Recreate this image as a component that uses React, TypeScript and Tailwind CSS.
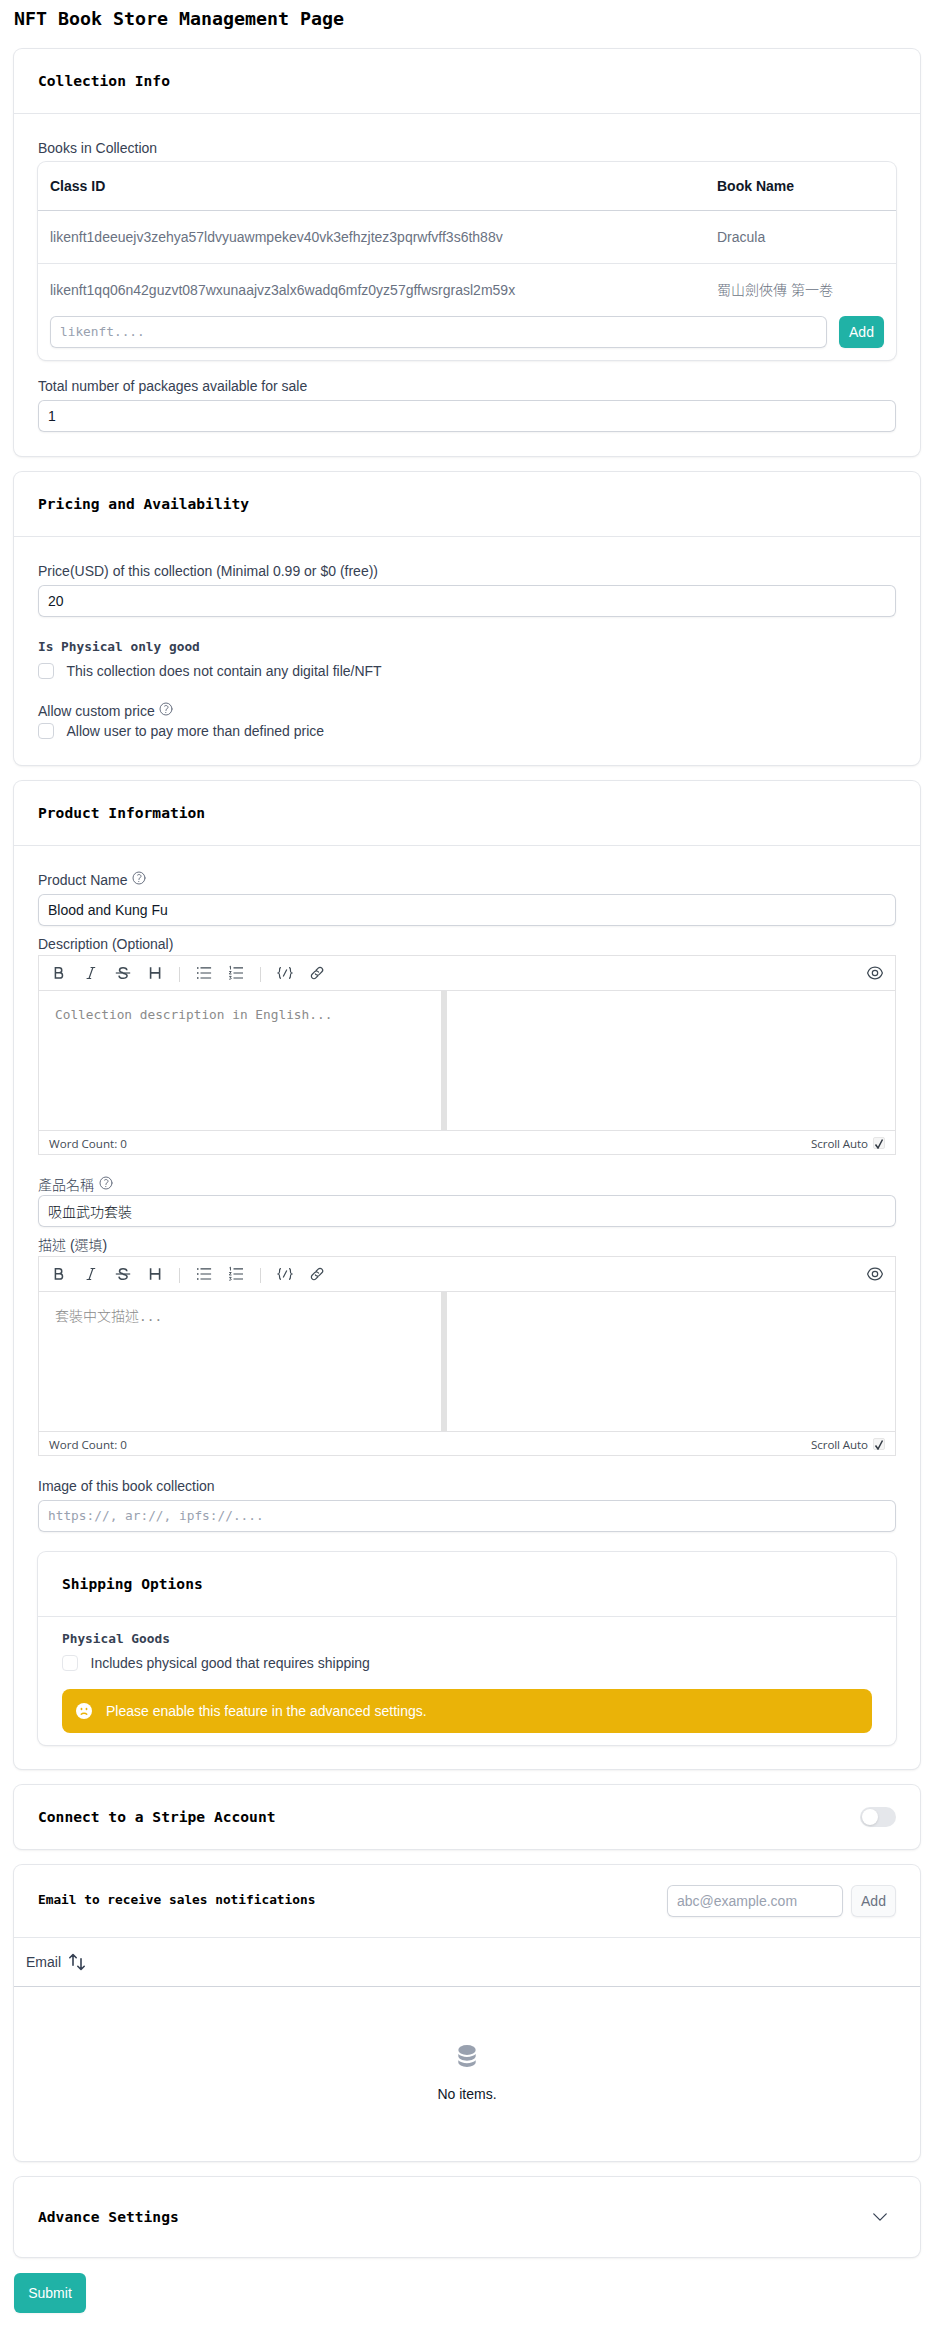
import React from "react";

const MONO = "font-['DejaVu_Sans_Mono','Noto_Sans_CJK_TC',monospace]";
const CARD = "rounded-lg bg-white shadow-sm ring-1 ring-gray-200";
const INPUT =
  "block h-8 rounded-md bg-white px-2.5 text-sm text-gray-900 shadow-xs ring-1 ring-inset ring-gray-300 outline-none placeholder:text-gray-400";

function Heading({ children }: { children: React.ReactNode }) {
  return <h2 className={`${MONO} text-[14.62px] leading-6 font-bold text-black`}>{children}</h2>;
}

function Card({ title, children }: { title: string; children: React.ReactNode }) {
  return (
    <section className={CARD}>
      <header className="h-16 px-6 py-5">
        <Heading>{title}</Heading>
      </header>
      <div className="border-t border-gray-200">{children}</div>
    </section>
  );
}

function Help() {
  return (
    <svg viewBox="0 0 24 24" className="size-4 text-gray-500" fill="none" stroke="currentColor" strokeWidth="1.5" strokeLinecap="round" strokeLinejoin="round">
      <path d="M9.879 7.519c1.171-1.025 3.071-1.025 4.242 0 1.172 1.025 1.172 2.687 0 3.712-.203.179-.43.326-.67.442-.745.361-1.45.999-1.45 1.827v.75M21 12a9 9 0 1 1-18 0 9 9 0 0 1 18 0zm-9 5.25h.008v.008H12v-.008z" />
    </svg>
  );
}

function Label({ children, help = false }: { children: React.ReactNode; help?: boolean }) {
  return (
    <div className="flex h-5 items-start gap-[3.5px] text-sm font-light text-gray-700">
      <span>{children}</span>
      {help && <Help />}
    </div>
  );
}

function MonoLabel({ children }: { children: React.ReactNode }) {
  return <div className={`${MONO} h-5 text-[12.8px] leading-[19px] font-bold text-gray-700`}>{children}</div>;
}

function Check({ children, faded = false }: { children: React.ReactNode; faded?: boolean }) {
  return (
    <label className="flex h-5 items-center gap-[12.5px] text-sm text-gray-700">
      <span className={faded ? "size-4 rounded border border-gray-200" : "size-4 rounded border border-gray-300"} />
      {children}
    </label>
  );
}

function Tool({ children }: { children: React.ReactNode }) {
  return (
    <span className="flex size-6 items-center justify-center text-[#3f4a54]">
      <svg viewBox="0 0 16 16" className="size-4" fill="none" stroke="currentColor" strokeWidth="1.2">
        {children}
      </svg>
    </span>
  );
}

function Editor({ placeholder }: { placeholder: React.ReactNode }) {
  return (
    <div className="mt-px flex h-[200px] flex-col border border-[#e2e2e4]">
      <div className="flex h-[35px] shrink-0 items-center justify-between border-b border-[#e2e2e4] px-2">
        <div className="flex items-center gap-2">
          <Tool>
            <path strokeWidth="1.5" d="M4.4 2.8h3.9a2.45 2.45 0 0 1 0 4.9H4.4zM4.4 7.7h4.4a2.7 2.7 0 0 1 0 5.4H4.4z" />
          </Tool>
          <Tool>
            <path d="M7.6 2.5h4.6M3.6 13.5h4.6M9.9 2.5 6 13.5" />
          </Tool>
          <Tool>
            <path strokeWidth="1.5" d="M11.9 5.2C11.600 2 4.600 1.800 4.500 5.200c0 1.300 1 2 3.500 2.600M8 8.200c2.600.6 4.100 1.300 4.100 2.600 0 3.400-7.900 3.400-8.100-.2" />
            <path d="M.8 8h14.400" />
          </Tool>
          <Tool>
            <path strokeWidth="1.6" d="M3.600 2.200v11.600M12.600 2.200v11.600M3.600 7.900h9" />
          </Tool>
          <span className="mx-1 h-[15px] w-px translate-y-[1px] bg-[#d9d9d9]" />
          <Tool>
            <path d="M4.500 2.900h10.600M4.500 8h10.600M4.500 13h10.600" />
            <path strokeWidth="1.5" d="M1 2.900h1.500M1 8h1.500M1 13h1.500" />
          </Tool>
          <Tool>
            <path d="M5.500 2.900h9.500M5.500 8h9.500M5.500 13h9.500" />
            <path strokeWidth="0.9" d="M1.500 1.800l1-.6v3.300M1.200 6.500h2L1.300 9h2.200M1.200 11.400h2l-1 1.200c1.500 0 1.400 1.900-1 1.600" />
          </Tool>
          <span className="mx-1 h-[15px] w-px translate-y-[1px] bg-[#d9d9d9]" />
          <Tool>
            <path d="M4 2.700c-1.500 0-1.400.8-1.400 2.300 0 2 0 2.600-1.200 3 1.200.4 1.200 1 1.200 3 0 1.500 0 2.300 1.400 2.300M12 2.700c1.500 0 1.400.8 1.400 2.300 0 2 0 2.600 1.200 3-1.200.4-1.200 1-1.200 3 0 1.500 0 2.300-1.400 2.300M9.800 4.500l-3.600 7" />
          </Tool>
          <Tool>
            <g transform="rotate(-45 8 8)">
              <path d="M7 10.600H3.700a2.600 2.600 0 0 1 0-5.200h3.600a2.600 2.600 0 0 1 2.300 3.600M9 5.400h3.300a2.600 2.600 0 0 1 0 5.200H8.700A2.600 2.600 0 0 1 6.400 7" />
            </g>
          </Tool>
        </div>
        <Tool>
          <path d="M.6 8C2 3.900 4.800 2.200 8 2.200S14 3.900 15.400 8C14 12.100 11.200 13.800 8 13.800S2 12.100.6 8z" />
          <circle cx="8" cy="8" r="2.700" />
        </Tool>
      </div>
      <div className="flex flex-1">
        <div className={`${MONO} w-[402px] px-4 pt-4 text-[12.8px] leading-4 text-[#8b8b8b]`}>{placeholder}</div>
        <div className="w-1.5 bg-[#e2e2e2]" />
        <div className="flex-1" />
      </div>
      <div className="flex h-6 shrink-0 items-center justify-between border-t border-[#e2e2e4] px-2.5 pt-0.5 font-['Open_Sans',sans-serif] text-[11.6px] text-[#3f4a54]">
        <span>Word Count: 0</span>
        <span className="flex items-center gap-[5px]">
          <span className="tracking-[-0.1px]">Scroll Auto</span>
          <span className="flex size-3 items-center justify-center rounded-[2px] border border-[#e6e6e6] bg-[#f5f5f5]">
            <svg viewBox="0 0 12 12" className="size-3 shrink-0" fill="none" stroke="#333b44" strokeWidth="1.5">
              <path d="M2.500 7.500 5 11 9.500 2.500" />
            </svg>
          </span>
        </span>
      </div>
    </div>
  );
}

function Books() {
  const books = [
    ["likenft1deeuejv3zehya57ldvyuawmpekev40vk3efhzjtez3pqrwfvff3s6th88v", "Dracula"],
    ["likenft1qq06n42guzvt087wxunaajvz3alx6wadq6mfz0yz57gffwsrgrasl2m59x", "蜀山劍俠傳 第一卷"],
  ];
  return (
    <div className={`mt-1 ${CARD}`}>
      <div className="grid grid-cols-[667px_1fr] text-sm font-semibold text-gray-900">
        <div className="px-3 py-3.5">Class ID</div>
        <div className="px-3 py-3.5">Book Name</div>
      </div>
      {books.map(([id, name], i) => (
        <div
          key={id}
          className={
            i === 0
              ? "grid h-[53px] grid-cols-[667px_1fr] border-t border-gray-300 text-sm font-light text-gray-500"
              : "grid h-[53px] grid-cols-[667px_1fr] border-t border-gray-200 text-sm font-light text-gray-500"
          }
        >
          <div className="px-3 py-4">{id}</div>
          <div className="px-3 py-4 whitespace-nowrap">{name}</div>
        </div>
      ))}
      <div className="flex gap-3 px-3 pb-3">
        <input className={`${INPUT} ${MONO} w-full pb-0.5 placeholder:text-[12.8px]`} placeholder="likenft...." />
        <button className="h-8 w-[45px] shrink-0 rounded-md bg-[#20b2a6] text-sm text-white shadow-xs">Add</button>
      </div>
    </div>
  );
}

export default function App() {
  return (
    <main className="flex flex-col gap-4 bg-white pr-3 pb-3 pl-3.5 font-['Liberation_Sans','Noto_Sans_CJK_TC',sans-serif]">
      <h1 className={`${MONO} -mb-4 h-[49px] pt-[5px] text-[18.27px] leading-7 font-bold text-black`}>
        NFT Book Store Management Page
      </h1>

      <Card title="Collection Info">
        <div className="p-6">
          <Label>Books in Collection</Label>
          <Books />
          <div className="mt-4 mb-1">
            <Label>Total number of packages available for sale</Label>
          </div>
          <input className={`${INPUT} w-full`} defaultValue="1" />
        </div>
      </Card>

      <Card title="Pricing and Availability">
        <div className="p-6">
          <div className="mb-1">
            <Label>Price(USD) of this collection (Minimal 0.99 or $0 (free))</Label>
          </div>
          <input className={`${INPUT} w-full`} defaultValue="20" />
          <div className="mt-5 mb-5 flex flex-col gap-1">
            <MonoLabel>Is Physical only good</MonoLabel>
            <Check>This collection does not contain any digital file/NFT</Check>
          </div>
          <Label help>Allow custom price</Label>
          <Check>Allow user to pay more than defined price</Check>
        </div>
      </Card>

      <Card title="Product Information">
        <div className="p-6">
          <div className="mb-1">
            <Label help>Product Name</Label>
          </div>
          <input className={`${INPUT} mb-2 w-full`} defaultValue="Blood and Kung Fu" />
          <Label>Description (Optional)</Label>
          <Editor placeholder="Collection description in English..." />
          <div className="mt-5">
            <Label help>產品名稱</Label>
          </div>
          <input className={`${INPUT} mb-2 w-full font-light`} defaultValue="吸血武功套裝" />
          <Label>描述 (選填)</Label>
          <Editor
            placeholder={
              <>
                <span className="text-sm leading-4 font-light">套裝中文描述</span>...
              </>
            }
          />
          <div className="mt-5 mb-1">
            <Label>Image of this book collection</Label>
          </div>
          <input
            className={`${INPUT} ${MONO} mb-5 w-full pb-0.5 placeholder:text-[12.8px]`}
            placeholder="https://, ar://, ipfs://...."
          />
          <Card title="Shipping Options">
            <div className="px-6 py-3">
              <div className="flex flex-col gap-1">
                <MonoLabel>Physical Goods</MonoLabel>
                <Check faded>Includes physical good that requires shipping</Check>
              </div>
              <div className="mt-4 flex h-11 items-center gap-3 rounded-lg bg-[#eab308] px-3 text-sm text-white">
                <svg viewBox="0 0 20 20" className="size-5">
                  <circle cx="10" cy="10" r="8" fill="white" />
                  <ellipse cx="7.5" cy="8" rx="0.9" ry="1.3" fill="#eab308" />
                  <ellipse cx="12.5" cy="8" rx="0.9" ry="1.3" fill="#eab308" />
                  <path d="M7.2 13.300c1.300-1.400 4.300-1.400 5.600 0" fill="none" stroke="#eab308" strokeWidth="1.3" strokeLinecap="round" />
                </svg>
                <span>Please enable this feature in the advanced settings.</span>
              </div>
            </div>
          </Card>
        </div>
      </Card>

      <section className={`flex h-16 items-center justify-between px-6 ${CARD}`}>
        <Heading>Connect to a Stripe Account</Heading>
        <span className="h-5 w-9 rounded-full bg-gray-200 p-0.5">
          <span className="block size-4 rounded-full bg-white shadow-sm" />
        </span>
      </section>

      <section className={`flex h-[296px] flex-col ${CARD}`}>
        <header className="flex h-[72px] items-center px-6">
          <h3 className={`${MONO} mb-0.5 flex-1 text-[12.8px] leading-5 font-bold text-black`}>
            Email to receive sales notifications
          </h3>
          <div className="flex gap-2">
            <input className={`${INPUT} w-[176px]`} placeholder="abc@example.com" />
            <button className="h-8 w-[45px] shrink-0 rounded-md bg-gray-50 text-sm text-gray-500 shadow-xs ring-1 ring-gray-200 ring-inset">
              Add
            </button>
          </div>
        </header>
        <div className="flex h-[49px] items-center gap-1.5 border-t border-gray-200 px-3 text-sm text-gray-700">
          Email
          <svg viewBox="0 0 20 20" className="size-5" fill="none" stroke="currentColor" strokeWidth="1.6" strokeLinecap="round" strokeLinejoin="round">
            <path d="M2.800 5.700 6 2.500l3.200 3.200M6 2.800v10.500M10.800 14.300 14 17.500l3.200-3.200M14 17.200V6.700" />
          </svg>
        </div>
        <div className="flex flex-1 flex-col items-center border-t border-gray-300 pt-[57px] text-sm text-gray-900">
          <svg viewBox="0 0 24 24" className="size-6 text-gray-400" fill="currentColor">
            <ellipse cx="12" cy="6" rx="8.700" ry="5" />
            <path d="M3.300 10.100c1.700 1.700 5 2.900 8.700 2.900s7-1.200 8.700-2.900v1.900c0 2.600-3.900 4.700-8.700 4.700s-8.700-2.100-8.700-4.700z" />
            <path d="M3.300 16.300c1.700 1.700 5 2.900 8.700 2.900s7-1.200 8.700-2.900v2c0 2.600-3.900 4.600-8.700 4.600s-8.700-2-8.700-4.600z" />
          </svg>
          <span className="mt-4">No items.</span>
        </div>
      </section>

      <section className={`flex h-20 items-center justify-between px-6 ${CARD}`}>
        <Heading>Advance Settings</Heading>
        <svg viewBox="0 0 20 20" className="mr-1.5 size-5 text-gray-700" fill="none" stroke="currentColor" strokeWidth="1.25" strokeLinecap="round" strokeLinejoin="round">
          <path d="m3.750 6.900 6.250 6.250 6.250-6.250" />
        </svg>
      </section>

      <button className="h-10 w-[72px] rounded-md bg-[#20b2a6] text-sm text-white shadow-xs">Submit</button>
    </main>
  );
}
